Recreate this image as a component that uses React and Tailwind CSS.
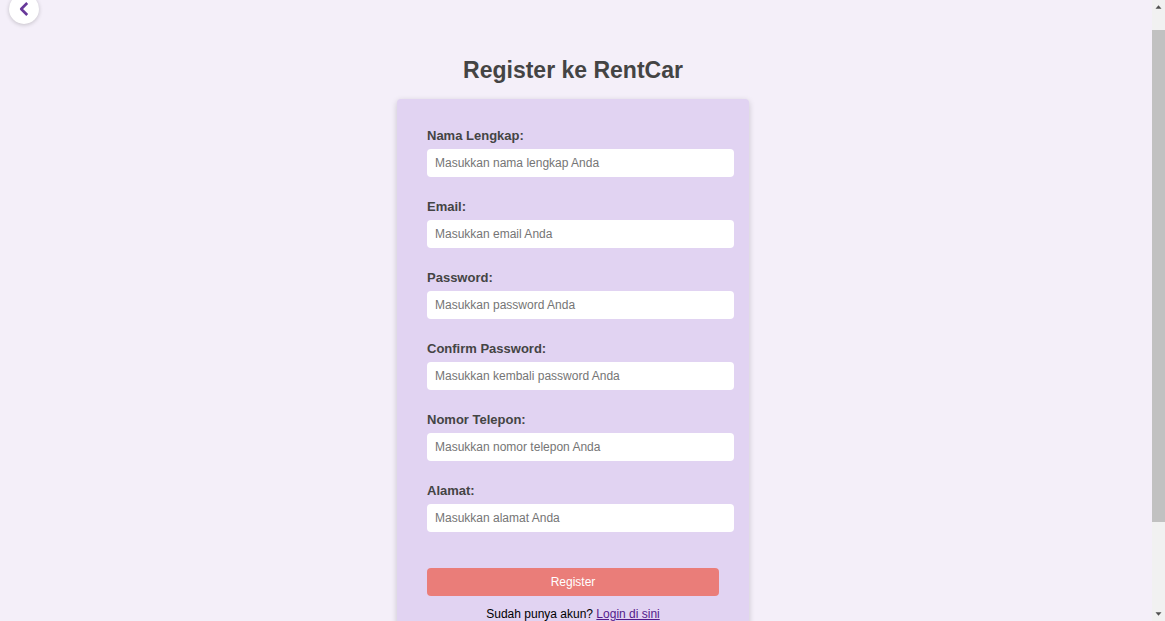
const fields = [
  { id: 'nama', label: 'Nama Lengkap:', type: 'text', placeholder: 'Masukkan nama lengkap Anda' },
  { id: 'email', label: 'Email:', type: 'email', placeholder: 'Masukkan email Anda' },
  { id: 'password', label: 'Password:', type: 'password', placeholder: 'Masukkan password Anda' },
  { id: 'confirm', label: 'Confirm Password:', type: 'password', placeholder: 'Masukkan kembali password Anda' },
  { id: 'telepon', label: 'Nomor Telepon:', type: 'tel', placeholder: 'Masukkan nomor telepon Anda' },
  { id: 'alamat', label: 'Alamat:', type: 'text', placeholder: 'Masukkan alamat Anda' },
];

function Field({ id, label, type, placeholder }) {
  return (
    <div className="flex flex-col gap-[5px]">
      <label htmlFor={id} className="text-[13px] leading-4 font-bold text-[#444444]">
        {label}
      </label>
      <input
        id={id}
        name={id}
        type={type}
        placeholder={placeholder}
        className="-mr-[15px] h-7 rounded-sm bg-white px-2 text-xs text-[#333333] outline-none placeholder:text-[#757575]"
      />
    </div>
  );
}

function Scrollbar() {
  return (
    <div aria-hidden="true" className="flex w-[13px] shrink-0 flex-col items-center bg-[#f1f1f1]">
      <div className="flex h-[30px] w-full shrink-0 justify-center pt-1">
        <svg width="7" height="6" viewBox="0 0 7 6">
          <path d="M3.5 1.2 6.5 4.8h-6z" fill="#505050" />
        </svg>
      </div>
      <div className="w-full grow-[495] basis-0 bg-[#c1c1c1]" />
      <div className="flex w-full grow-[96] basis-0 items-end justify-center pb-1">
        <svg width="7" height="6" viewBox="0 0 7 6">
          <path d="M3.5 4.8.5 1.2h6z" fill="#505050" />
        </svg>
      </div>
    </div>
  );
}

export default function App() {
  return (
    <div className="flex h-screen overflow-hidden bg-[#f4eff9] font-['Liberation_Sans',Arial,sans-serif]">
      <div className="flex min-w-0 flex-1 flex-col">
        <header className="-mt-1.5 shrink-0 pl-[9px]">
          <button
            type="button"
            aria-label="Kembali"
            className="flex size-[30px] items-center justify-center rounded-full bg-white shadow-[0_1px_4px_rgba(0,0,0,0.2)]"
          >
            <svg width="10" height="16" viewBox="0 0 10 16" fill="none">
              <path d="M8.2 2 2.2 8l6 6" stroke="#68399a" strokeWidth="2.6" strokeLinejoin="round" />
            </svg>
          </button>
        </header>
        <main className="flex flex-col items-center pt-[31px] pr-1.5">
          <h1 className="mb-[13px] text-[23px] leading-[31px] font-bold text-[#444444]">Register ke RentCar</h1>
          <form className="w-[352px] rounded-sm bg-[#e1d3f2] px-[30px] pt-[29px] pb-7 shadow-[0_2px_6px_rgba(0,0,0,0.18)]">
            <div className="flex flex-col gap-[22px]">
              {fields.map((field) => (
                <Field key={field.id} {...field} />
              ))}
            </div>
            <button type="submit" className="mt-9 h-7 w-full rounded-sm bg-[#ea7d79] text-xs text-white">
              Register
            </button>
            <p className="mt-2.5 text-center text-xs text-black">
              Sudah punya akun?{' '}
              <a href="#login" className="text-[#551a8b] underline">
                Login di sini
              </a>
            </p>
          </form>
        </main>
      </div>
      <Scrollbar />
    </div>
  );
}
